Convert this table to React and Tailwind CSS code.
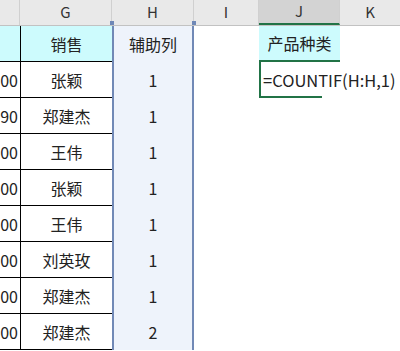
const font = { fontFamily: '"Noto Sans CJK SC", "Microsoft YaHei", sans-serif' };

const rows = [
  { amount: "3000", name: "张颖", flag: "1" },
  { amount: "2890", name: "郑建杰", flag: "1" },
  { amount: "3000", name: "王伟", flag: "1" },
  { amount: "3000", name: "张颖", flag: "1" },
  { amount: "3000", name: "王伟", flag: "1" },
  { amount: "3000", name: "刘英玫", flag: "1" },
  { amount: "3000", name: "郑建杰", flag: "1" },
  { amount: "3000", name: "郑建杰", flag: "2" },
];

function ColHead({ label, w, selected }) {
  return (
    <div
      className={`flex h-full shrink-0 items-center justify-center border-r border-[#d0d0d0] text-[15px] text-[#333] ${w} ${
        selected ? "border-b-2 border-b-[#217346] bg-[#d3d3d3]" : ""
      }`}
    >
      {label}
    </div>
  );
}

export default function App() {
  return (
    <div
      className="relative h-[351px] w-[400px] overflow-hidden bg-white text-[16px] text-[#222]"
      style={font}
    >
      {/* column letters */}
      <div className="flex h-[26px] border-b border-[#c2c2c2] bg-[#e9e9e9]">
        <ColHead label="" w="w-[20px]" />
        <ColHead label="G" w="w-[92px]" />
        <div className="relative flex h-full w-[82px] shrink-0 items-center justify-center border-r border-[#d0d0d0] text-[15px] text-[#333]">
          H
          <span className="absolute -left-[2px] bottom-0 h-[4px] w-[4px] bg-[#6f88b6]" />
          <span className="absolute -right-[3px] bottom-0 h-[4px] w-[4px] bg-[#6f88b6]" />
        </div>
        <ColHead label="I" w="w-[65px]" />
        <ColHead label="J" w="w-[81px]" selected />
        <div className="flex h-full flex-1 items-center justify-center text-[15px] text-[#333]">K</div>
      </div>

      {/* title row */}
      <div className="flex h-[36px]">
        <div className="w-[20px] shrink-0 border-b border-black bg-[#cdfbfd]" />
        <div className="flex w-[92px] shrink-0 items-center justify-center border-b border-l border-black bg-[#cdfbfd]">
          销售
        </div>
        <div className="flex w-[82px] shrink-0 items-center justify-center border-x-2 border-[#7189b6] bg-[#eef3fb]">
          辅助列
        </div>
        <div className="w-[65px] shrink-0" />
        <div className="flex w-[81px] shrink-0 items-center justify-center border-b-2 border-[#217346] bg-[#cdfbfd]">
          产品种类
        </div>
        <div className="flex-1" />
      </div>

      {rows.map((r, i) => (
        <div key={i} className="flex h-[36px]">
          <div className="flex w-[20px] shrink-0 items-center justify-end overflow-hidden border-b border-black pr-[2px]">
            <span className="shrink-0">{r.amount}</span>
          </div>
          <div className="flex w-[92px] shrink-0 items-center justify-center border-b border-l border-black">
            {r.name}
          </div>
          <div className="flex w-[82px] shrink-0 items-center justify-center border-x-2 border-[#7189b6] bg-[#eef3fb]">
            {r.flag}
          </div>
          <div className="w-[65px] shrink-0" />
          {i === 0 ? (
            <div className="relative flex w-[81px] shrink-0 items-center border-l-2 border-[#217346] pl-[2px]">
              <span className="whitespace-nowrap text-[16.5px]">=COUNTIF(H:H,1)</span>
              <span className="absolute -left-[2px] bottom-0 h-[2px] w-[63px] bg-[#217346]" />
            </div>
          ) : (
            <div className="w-[81px] shrink-0" />
          )}
          <div className="flex-1" />
        </div>
      ))}
    </div>
  );
}
